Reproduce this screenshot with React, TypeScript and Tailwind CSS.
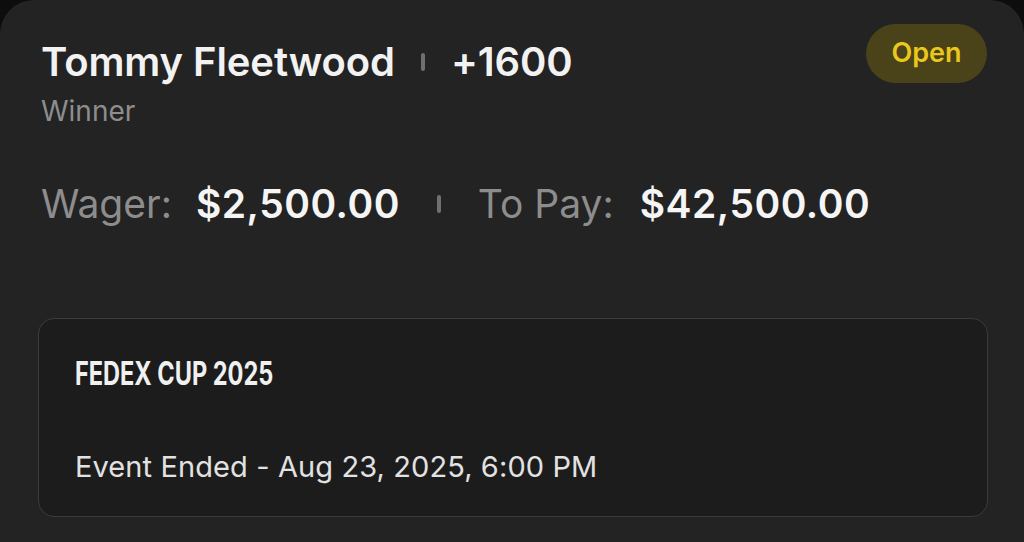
import React from 'react';

const Divider: React.FC<{ className?: string }> = ({ className }) => (
  <span className={`inline-block w-[4px] rounded-full bg-[#6f6f6f] ${className ?? ''}`} />
);

const App: React.FC = () => {
  return (
    <div className="w-[1024px] h-[542px] bg-[#0d0d0d] overflow-hidden" style={{ fontFamily: 'Inter, "Noto Sans", sans-serif' }}>
      <div className="h-full bg-[#232323] rounded-t-[34px] px-[38px]">
        {/* header */}
        <div className="flex justify-between items-start pl-[3px] pt-[24px]">
          <div className="pt-[16px]">
            <div className="flex items-center text-[40px] leading-[44px] font-semibold text-[#f2f2f2] tracking-[-0.1px]">
              <span>Tommy Fleetwood</span>
              <Divider className="h-[18px] mx-[26px]" />
              <span>+1600</span>
            </div>
            <div className="mt-[11px] text-[28px] leading-[32px] text-[#8d8d8d]">Winner</div>
          </div>
          <div className="h-[59px] w-[121px] -mr-[1px] rounded-full bg-[#4a4219] flex items-center justify-center text-[27px] font-semibold text-[#e9c71d]">
            Open
          </div>
        </div>

        {/* wager */}
        <div className="flex items-center pl-[3px] mt-[53px] text-[39px] leading-[48px]">
          <span className="text-[#8d8d8d] font-normal">Wager:</span>
          <span className="ml-[24px] font-semibold text-[#f5f5f5] tracking-[0.5px]">$2,500.00</span>
          <Divider className="h-[18px] mx-[37px]" />
          <span className="text-[#8d8d8d] font-normal">To Pay:</span>
          <span className="ml-[26px] font-semibold text-[#f5f5f5] tracking-[0.5px]">$42,500.00</span>
        </div>

        {/* event card */}
        <div className="mt-[90px] -mr-[2px] h-[199px] rounded-[16px] border border-[#3b3b3b] bg-[#1c1c1c] px-[36px] pt-[37px]">
          <div className="text-[32px] leading-[36px] font-bold text-[#f0f0f0] origin-left scale-x-[0.735] whitespace-nowrap">
            FEDEX CUP 2025
          </div>
          <div className="mt-[58px] text-[29px] leading-[34px] text-[#e2e2e2] tracking-[0.1px]">
            Event Ended - Aug 23, 2025, 6:00 PM
          </div>
        </div>
      </div>
    </div>
  );
};

export default App;
